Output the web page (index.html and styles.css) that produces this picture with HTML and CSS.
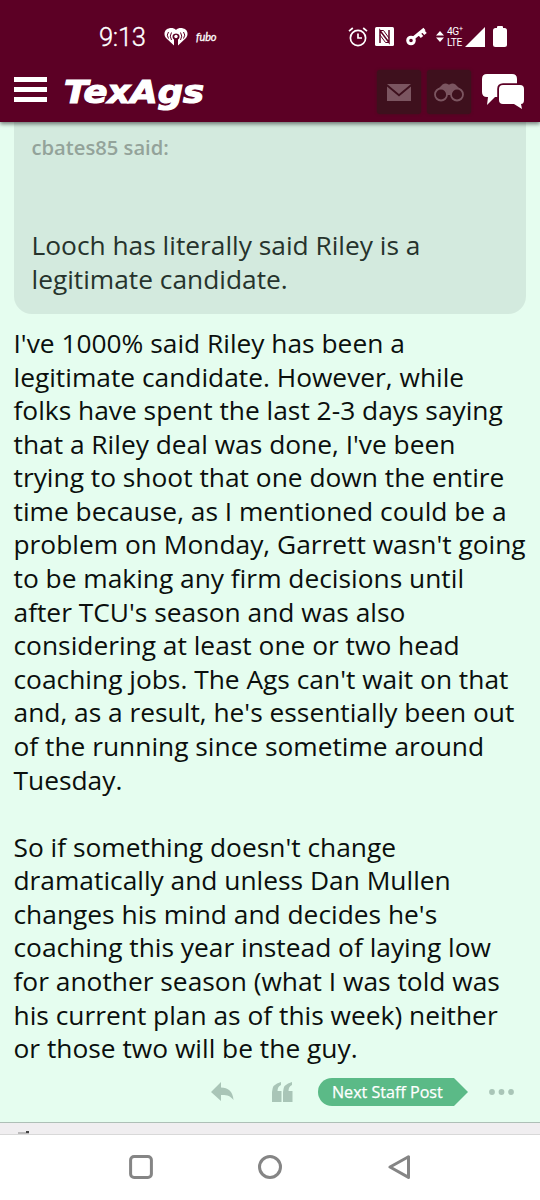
FILE: index.html
```html
<!DOCTYPE html>
<html lang="en">
<head>
<meta charset="utf-8">
<title>TexAgs</title>
<link rel="stylesheet" href="styles.css">
</head>
<body>
<div class="phone">
  <header class="top">
    <div class="status">
      <span class="clock">9:13</span>
      <svg class="heart" width="24" height="18" viewBox="0 0 24 18">
        <path fill="#fff" d="M12 2C9.500-.6 5.500-.5 2.500 1.500-.2 3.500 0 7.500 2 10l8 7.500V11.500c-2-1.200-2-4.500 0-5.500q2-1 4 0c2 1 2 4.300 0 5.500v6L22 10c2-2.500 2.200-6.500-.5-8.500C18.500-.5 14.500-.6 12 2z"/>
        <circle cx="12" cy="8.500" r="1.700" fill="#fff"/>
        <path d="M7.500 4.500q-2.500 3.500 0 7.500M4.500 4q-2.500 3 0 6.500M16.500 4.500q2.500 3.500 0 7.500M19.500 4q2.500 3 0 6.500" fill="none" stroke="#5c0025" stroke-width="1"/>
      </svg>
      <span class="fubo">fubo</span>
      <svg class="alarm" width="20" height="20" viewBox="0 0 20 20" fill="none" stroke="#fff" stroke-width="1.700">
        <circle cx="10" cy="11" r="7.600"/><path d="M10 6.500V11h4M1 4.200L4.800 1M19 4.200L15.200 1"/>
      </svg>
      <svg class="nfc" width="19" height="19" viewBox="0 0 19 19">
        <rect width="19" height="19" rx="1.500" fill="#fff"/><path d="M5 16V3.500l9 12V3" fill="none" stroke="#5c0025" stroke-width="1.500"/><path d="M5 3.500h3.500l5.500 7.500M14 15.500h-3.500L5 8" fill="none" stroke="#5c0025" stroke-width="1"/>
      </svg>
      <svg class="key" width="21" height="19" viewBox="0 0 21 19" fill="none" stroke="#fff">
        <circle cx="5" cy="13.500" r="3.300" stroke-width="3"/><path d="M7.500 11L18.500 2M13 6.500l3 3.500M16.500 3.500l3 3.500" stroke-width="3.300"/>
      </svg>
      <svg class="updown" width="8" height="12" viewBox="0 0 8 12" fill="#fff"><path d="M4 0l4 4.500H0zM0 6.500h8L4 11z"/></svg>
      <span class="net"><span>4G<sup>+</sup></span><span>LTE</span></span>
      <svg class="signal" width="20" height="20" viewBox="0 0 20 20"><path d="M0 20L20 0v20z" fill="#fff"/></svg>
      <svg class="battery" width="14" height="21" viewBox="0 0 14 21" fill="#fff"><rect x="4" width="6" height="4" rx="1"/><rect y="2" width="14" height="19" rx="2.500"/></svg>
    </div>
    <div class="nav">
      <div class="menu"><i></i><i></i><i></i></div>
      <svg class="logo" width="160" height="48" viewBox="0 0 160 48">
        <text x="2" y="35" textLength="140" lengthAdjust="spacingAndGlyphs">TexAgs</text>
      </svg>
      <div class="tile first">
        <svg width="24" height="17" viewBox="0 0 24 17"><path d="M0 0h24L12 10zM0 2.500L12 12.500 24 2.500V17H0z" fill="#7b5560"/></svg>
      </div>
      <div class="tile">
        <svg width="30" height="19" viewBox="0 0 30 19"><path d="M3 7L8.500 1.500q3-2 6 0h1q3-2 6 0L27 7l-8 5h-8z" fill="#7b5560"/><circle cx="7" cy="11.500" r="6" fill="#3e101d" stroke="#7b5560" stroke-width="1.800"/><circle cx="23" cy="11.500" r="6" fill="#3e101d" stroke="#7b5560" stroke-width="1.800"/></svg>
      </div>
      <svg class="chat" width="44" height="36" viewBox="0 0 44 36">
        <path fill="#fff" d="M5 0h25q5 0 5 5v16q0 2-4 2H13L5 31l1-8H5q-5 0-5-5V5q0-5 5-5z"/>
        <path fill="#fff" stroke="#5c0025" stroke-width="3.600" paint-order="stroke" d="M21 11h17q4 0 4 4v11q0 4-3 4l1 5-8-5H21q-4 0-4-4V15q0-4 4-4z"/>
      </svg>
    </div>
  </header>
  <main class="post">
    <blockquote class="quote">
      <div class="author">cbates85 said:</div>
      <p>Looch has literally said Riley is a<br>legitimate candidate.</p>
    </blockquote>
    <div class="body">
      <p>I've 1000% said Riley has been a<br>legitimate candidate. However, while<br>folks have spent the last 2-3 days saying<br>that a Riley deal was done, I've been<br>trying to shoot that one down the entire<br>time because, as I mentioned could be a<br>problem on Monday, Garrett wasn't going<br>to be making any firm decisions until<br>after TCU's season and was also<br>considering at least one or two head<br>coaching jobs. The Ags can't wait on that<br>and, as a result, he's essentially been out<br>of the running since sometime around<br>Tuesday.</p>
      <p>So if something doesn't change<br>dramatically and unless Dan Mullen<br>changes his mind and decides he's<br>coaching this year instead of laying low<br>for another season (what I was told was<br>his current plan as of this week) neither<br>or those two will be the guy.</p>
    </div>
    <div class="actions">
      <svg class="reply" width="23" height="20" viewBox="0 0 23 20"><path d="M0 10L10 0v5.500c7 0 12 4 12.500 12.500-3-4-6.500-5.200-12.500-5v6z" fill="#a9c5b7"/></svg>
      <svg class="quotes" width="21" height="20" viewBox="0 0 21 20" fill="#a9c5b7"><path d="M9 0v3Q5.500 4.500 5.500 9H9.500V20H0V10Q0 2 9 0z"/><path d="M20 0v3q-3.500 1.500-3.500 6h4V20H11V10Q11 2 20 0z"/></svg>
      <div class="next"><svg width="150" height="28" viewBox="0 0 150 28"><path d="M14 0h122l14 14-14 14H14A14 14 0 0 1 14 0z" fill="#5bba87"/></svg><span>Next Staff Post</span></div>
      <svg class="dots" width="26" height="6" viewBox="0 0 26 6" fill="#a9c5b7"><circle cx="3" cy="3" r="2.900"/><circle cx="12.500" cy="3" r="2.900"/><circle cx="22" cy="3" r="2.900"/></svg>
    </div>
  </main>
  <div class="peek"><svg width="12" height="4" viewBox="0 0 12 4"><path d="M0 3h11" stroke="#888"/><path d="M8 1h3v2H8z" fill="#444"/></svg></div>
  <footer class="keys">
    <svg width="24" height="24" viewBox="0 0 24 24"><rect x="1.600" y="1.600" width="20.800" height="20.800" rx="3.500"/></svg>
    <svg width="24" height="24" viewBox="0 0 24 24"><circle cx="12" cy="12" r="10.500"/></svg>
    <svg width="24" height="24" viewBox="0 0 24 24"><path d="M3 12L21.500 1.800v20.600z" stroke-linejoin="round"/></svg>
  </footer>
</div>
</body>
</html>
```
FILE: styles.css
```css
* { box-sizing: border-box; }
body { margin: 0; background: #fff; font-family: "Open Sans", sans-serif; }
p, blockquote { margin: 0; }
svg { display: block; flex: none; }
.phone { width: 540px; height: 1200px; display: flex; flex-direction: column; overflow: hidden; }
.top { position: relative; height: 122px; flex: none; background: #5c0025; box-shadow: 0 2px 4px rgba(0,0,0,.5); color: #fff; }
.status { height: 65px; padding: 8px 0 0 99px; display: flex; align-items: center; }
.clock { flex: none; width: 65px; font: 300 25.500px/30px Roboto, sans-serif; letter-spacing: -.3px; -webkit-text-stroke: .35px #fff; white-space: nowrap; }
.fubo { flex: none; width: 160px; padding-left: 8px; font: italic 400 11px/18px Lato, sans-serif; letter-spacing: -.1px; -webkit-text-stroke: .3px #fff; }
.nfc { margin-left: 7px; }
.key { margin-left: 12px; }
.updown { margin-left: 9px; }
.net { flex: none; display: flex; flex-direction: column; width: 18px; margin-left: 3px; padding-top: 1px; font: 400 10.200px/11.500px Roboto, sans-serif; letter-spacing: -.4px; white-space: nowrap; }
.net sup { font-size: 7px; line-height: 0; vertical-align: 4px; }
.signal { margin-left: 0; }
.battery { margin-left: 8px; margin-top: -1px; }
.nav { height: 54px; padding-left: 14px; display: flex; align-items: center; }
.menu { width: 33px; display: flex; flex-direction: column; gap: 5px; margin-top: -5px; }
.menu i { height: 5px; background: #fff; }
.logo { margin-left: 15px; }
.logo text { font: italic 700 32px "DejaVu Sans", sans-serif; fill: #fff; stroke: #fff; stroke-width: 1.2; }
.tile { width: 44px; height: 44px; border-radius: 3px; margin-left: 6px; display: grid; place-items: center; background: #3e101d; box-shadow: 0 0 3px #3e101d; }
.tile.first { margin-left: 155px; }
.chat { margin-left: 11px; }
.post { height: 1001px; flex: none; background: #e5fdef; border-bottom: 1px solid #aebfb6; padding: 0 14px; }
.quote { height: 192px; padding: 12px 18px 0; border-radius: 0 0 18px 18px; background: #d3eade; }
.author { height: 95px; margin-left: -.5px; font-size: 20.200px; line-height: 26px; font-weight: 600; color: #93a39a; }
.quote p { margin-left: -.5px; font-size: 26.320px; line-height: 33.580px; color: #26332c; white-space: nowrap; }
.body { margin-left: -.5px; padding-top: 13px; font-size: 26.330px; line-height: 33.580px; color: #0b0f0d; white-space: nowrap; }
.body p + p { margin-top: 33.580px; }
.actions { display: flex; align-items: center; height: 28px; margin-top: 12px; padding-left: 197px; }
.quotes { margin-left: 38px; }
.next { display: grid; margin-left: 24.500px; }
.next > * { grid-area: 1 / 1; }
.next span { padding-left: 14.500px; color: #fff; font-size: 16.100px; line-height: 28px; font-weight: 500; -webkit-text-stroke: .25px #fff; white-space: nowrap; }
.dots { margin-left: 21.500px; }
.peek { height: 12px; flex: none; background: #f0eef0; border-bottom: 1px solid #d8d8d8; padding: 7px 0 0 18px; }
.keys { flex: 1; display: flex; gap: 105px; padding: 20px 0 0 129px; background: #fff; }
.keys svg { fill: none; stroke: #858585; stroke-width: 3; }
```
